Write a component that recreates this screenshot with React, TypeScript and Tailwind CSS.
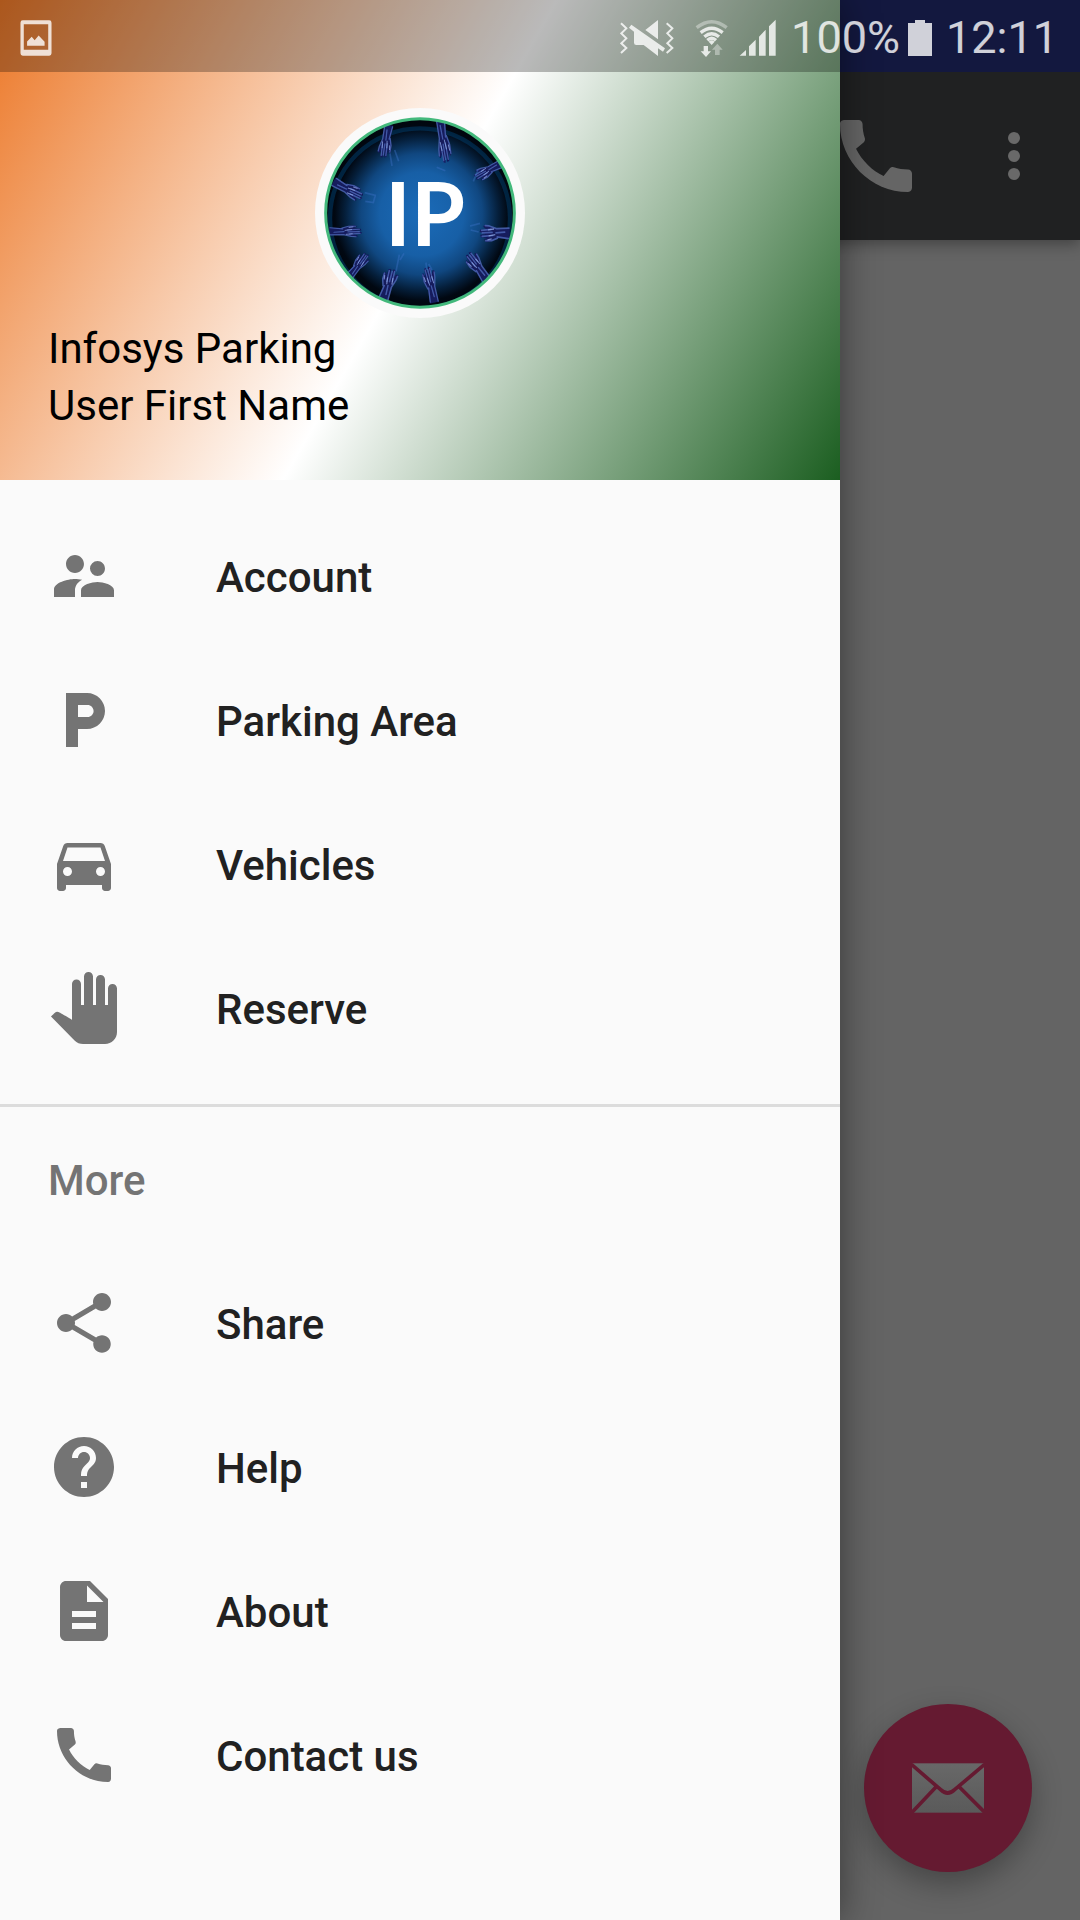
import type { IconType } from "react-icons";
import {
  MdCall,
  MdDescription,
  MdDirectionsCar,
  MdHelp,
  MdLocalParking,
  MdPanTool,
  MdShare,
  MdSupervisorAccount,
} from "react-icons/md";

type Item = { label: string; icon: IconType };

const mainItems: Item[] = [
  { label: "Account", icon: MdSupervisorAccount },
  { label: "Parking Area", icon: MdLocalParking },
  { label: "Vehicles", icon: MdDirectionsCar },
  { label: "Reserve", icon: MdPanTool },
];

const moreItems: Item[] = [
  { label: "Share", icon: MdShare },
  { label: "Help", icon: MdHelp },
  { label: "About", icon: MdDescription },
  { label: "Contact us", icon: MdCall },
];

function MenuList({ items }: { items: Item[] }) {
  return (
    <ul>
      {items.map(({ label, icon: Icon }) => (
        <li key={label}>
          <button type="button" className="flex h-36 w-full items-center gap-24 px-12 text-left">
            <Icon className="size-[72px] shrink-0 text-[#747474]" />
            <span className="pt-1 text-[42px] leading-[50px] font-medium text-[#212121]">{label}</span>
          </button>
        </li>
      ))}
    </ul>
  );
}

function Hand({ at }: { at: string }) {
  return (
    <g transform={at}>
      <path
        d="M-13-50 13-50 11-10 18 8 20 28 15 36 11 24 9 46 3 48 2 30-3 50-9 47-8 26-15 38-20 34-15 12-11-6Z"
        fill="#131a5c"
      />
      <path
        d="M-12-48-11-6-17 18-18 32M-9 12-7 44M-2 8-1 42M5 6 7 42M11-10 17 10 17 30M12-46 8-8M-3-34-1-4"
        fill="none"
        stroke="#4f69b8"
        strokeWidth="4"
        strokeLinejoin="round"
        strokeLinecap="round"
        opacity=".8"
      />
      <path d="M-10 2-8 22M3-2 6 20M13 10 15 24" stroke="#93aae6" strokeWidth="3" opacity=".75" />
    </g>
  );
}

function Avatar() {
  return (
    <div className="grid size-[210px] place-items-center rounded-full bg-[#fafafa]">
      <svg viewBox="72 81 576 576" className="size-48" role="img" aria-label="IP">
        <defs>
          <radialGradient id="glow" gradientUnits="userSpaceOnUse" cx="365" cy="372" r="280">
            <stop offset="0" stopColor="#1b6bb8" />
            <stop offset=".45" stopColor="#175fa6" />
            <stop offset=".65" stopColor="#104780" />
            <stop offset=".82" stopColor="#051f3b" />
            <stop offset=".93" stopColor="#010812" />
            <stop offset="1" stopColor="#01060e" />
          </radialGradient>
          <filter id="soft" x="-10%" y="-10%" width="120%" height="120%">
            <feGaussianBlur stdDeviation="2" />
          </filter>
          <clipPath id="disc">
            <circle cx="360" cy="369" r="281" />
          </clipPath>
        </defs>
        <circle cx="360" cy="369" r="283" fill="url(#glow)" />
        <g clipPath="url(#disc)">
          <g filter="url(#soft)">
            <circle cx="360" cy="385" r="270" fill="none" stroke="#0b3a66" strokeWidth="13" opacity=".55" />
            <Hand at="translate(258 154) rotate(10)" />
            <Hand at="translate(430 152) rotate(-8) scale(1 1.35)" />
            <Hand at="translate(564 242) rotate(62) scale(.95 .9)" />
            <Hand at="translate(144 298) rotate(-62) scale(1.05 1)" />
            <Hand at="translate(584 430) rotate(90) scale(1.3 .9)" />
            <Hand at="translate(136 424) rotate(-90) scale(.9 1)" />
            <Hand at="translate(174 526) rotate(-142) scale(.9)" />
            <Hand at="translate(264 582) rotate(-163) scale(1.15 .95)" />
            <Hand at="translate(392 584) rotate(168) scale(1 1.1)" />
            <Hand at="translate(532 530) rotate(145) scale(1.1 1)" />
            <path
              d="M288 544 298 494M300 510 312 490M380 540 378 518M396 540 386 522M284 180 296 214M270 190 276 228M194 308 226 316 220 338 196 334M510 408 540 400M512 420 536 426M410 232 436 242M520 274 534 240"
              fill="none"
              stroke="#3d74c9"
              strokeWidth="5"
              opacity=".4"
            />
          </g>
        </g>
        <circle cx="360" cy="369" r="283" fill="none" stroke="#43b97c" strokeWidth="9" />
        <text x="255" y="469" fill="#fff" fontSize="262" className="font-[Lato,sans-serif] font-bold">
          IP
        </text>
      </svg>
    </div>
  );
}

function PictureIcon() {
  return (
    <svg viewBox="60 56 96 109" className="h-9 w-8" fill="currentColor">
      <path
        fillRule="evenodd"
        d="M68 57H148Q155 57 155 64V157Q155 164 148 164H68Q61 164 61 157V64Q61 57 68 57ZM71 69V146H145V69Z"
      />
      <path d="M81 134V121L95 107 104 117 116 103 134 122V134Z" />
    </svg>
  );
}

function MuteVibrateIcon() {
  return (
    <svg viewBox="60 54 165 114" className="h-[38px] w-[55px]">
      <path
        d="M63 67 79 82 64 97 79 112 64 127 79 141 63 156M200 67 217 82 202 97 217 112 202 127 217 141 200 156"
        fill="none"
        stroke="currentColor"
        strokeWidth="6"
      />
      <path fill="currentColor" d="M174 57V115L136 87ZM94 71 195 142 189 152 174 142V165L131 132H109Q102 132 102 125V92L87 80Z" />
    </svg>
  );
}

function WifiIcon() {
  return (
    <svg viewBox="285 51 99 117" className="h-[39px] w-[33px]" fill="none" stroke="currentColor" strokeWidth="10">
      <path d="M290 77Q335 41 380 77" opacity=".45" />
      <path d="M302 92Q335 66 368 92M313 104Q335 86 357 104M322 115Q335 103 348 115" />
      <path d="M326 119Q335 111 344 119L335 129Z" fill="currentColor" stroke="none" />
      <path d="M311 132H324V148H333L318 165 302 148H311Z" fill="currentColor" stroke="none" />
      <path d="M345 159H359V143H368L352 125 336 143H345Z" fill="currentColor" stroke="none" opacity=".45" />
    </svg>
  );
}

function SignalIcon() {
  return (
    <svg viewBox="417 54 114 114" className="size-[38px]" fill="currentColor">
      <path d="M419 164 438 147V164ZM447 164V136L467 116V164ZM477 164V107L497 86V164ZM507 164V76L527 56V164Z" />
    </svg>
  );
}

function BatteryIcon() {
  return (
    <svg viewBox="0 0 24 36" className="h-9 w-6" fill="currentColor">
      <path d="M7 0H17V3H24V36H0V3H7Z" />
    </svg>
  );
}

function EnvelopeIcon() {
  return (
    <svg viewBox="276 310 216 150" className="h-[50px] w-[72px]">
      <defs>
        <linearGradient id="paper" x1="0" y1="0" x2="0" y2="1">
          <stop offset="0" stopColor="#686868" />
          <stop offset="1" stopColor="#5a5a5a" />
        </linearGradient>
      </defs>
      <rect x="276" y="311" width="216" height="148" fill="url(#paper)" />
      <path
        d="M274 314 362 390Q383 410 404 390L494 314M274 460 348 382M494 458 418 382"
        fill="none"
        stroke="#651a31"
        strokeWidth="11"
      />
    </svg>
  );
}

export default function App() {
  return (
    <div className="grid min-h-screen grid-cols-1 bg-[#646464] font-[Roboto,sans-serif]">
      {/* Dimmed screen behind the drawer */}
      <main className="col-start-1 row-start-1 flex flex-col">
        <header className="bg-[#202122] shadow-[0_4px_14px_rgba(0,0,0,0.35)]">
          <div className="h-[72px] bg-[#13183f]" />
          <div className="flex h-42 items-center justify-end">
            <button type="button" aria-label="Call" className="px-6 text-[#656565]">
              <MdCall className="size-24" />
            </button>
            <button type="button" aria-label="More options" className="flex h-24 w-33 flex-col items-center justify-center gap-[6px]">
              <span className="size-3 rounded-full bg-[#696969]" />
              <span className="size-3 rounded-full bg-[#696969]" />
              <span className="size-3 rounded-full bg-[#696969]" />
            </button>
          </div>
        </header>
        <div className="flex grow items-end justify-end p-12">
          <button
            type="button"
            aria-label="Send mail"
            className="grid size-42 place-items-center rounded-full bg-[#651a31] shadow-[0_12px_30px_rgba(0,0,0,0.3)]"
          >
            <EnvelopeIcon />
          </button>
        </div>
      </main>

      {/* Navigation drawer */}
      <aside className="z-10 col-start-1 row-start-1 w-7/9 bg-[#fafafa] shadow-[0_0_36px_rgba(0,0,0,0.45)]">
        <header className="flex flex-col gap-[2px] bg-[linear-gradient(119.74deg,#ec7828,#ffffff_50%,#1b5e20)] px-12 pt-27 pb-[46px]">
          <div className="flex justify-center">
            <Avatar />
          </div>
          <div className="text-[42px] leading-[57px] text-black">
            <p>Infosys Parking</p>
            <p>User First Name</p>
          </div>
        </header>
        <nav>
          <div className="border-b-3 border-[#dcdcdc] py-6">
            <MenuList items={mainItems} />
          </div>
          <h2 className="flex h-36 items-center px-12 pt-1 text-[42px] leading-[50px] font-medium text-[#747474]">More</h2>
          <MenuList items={moreItems} />
        </nav>
      </aside>

      {/* Status bar */}
      <div className="z-20 col-start-1 row-start-1 h-[72px] w-7/9 bg-black/27" />
      <div className="z-20 col-start-1 row-start-1 flex h-[72px] items-center pt-1 pr-[22px] pl-5 text-[45px] leading-[54px] text-white/80">
        <PictureIcon />
        <div className="ml-auto flex items-center">
          <MuteVibrateIcon />
          <div className="ml-5 flex items-center gap-[11px]">
            <WifiIcon />
            <SignalIcon />
          </div>
          <span className="ml-[14px]">100%</span>
          <div className="mr-[14px] ml-2">
            <BatteryIcon />
          </div>
          <span>12:11</span>
        </div>
      </div>
    </div>
  );
}
